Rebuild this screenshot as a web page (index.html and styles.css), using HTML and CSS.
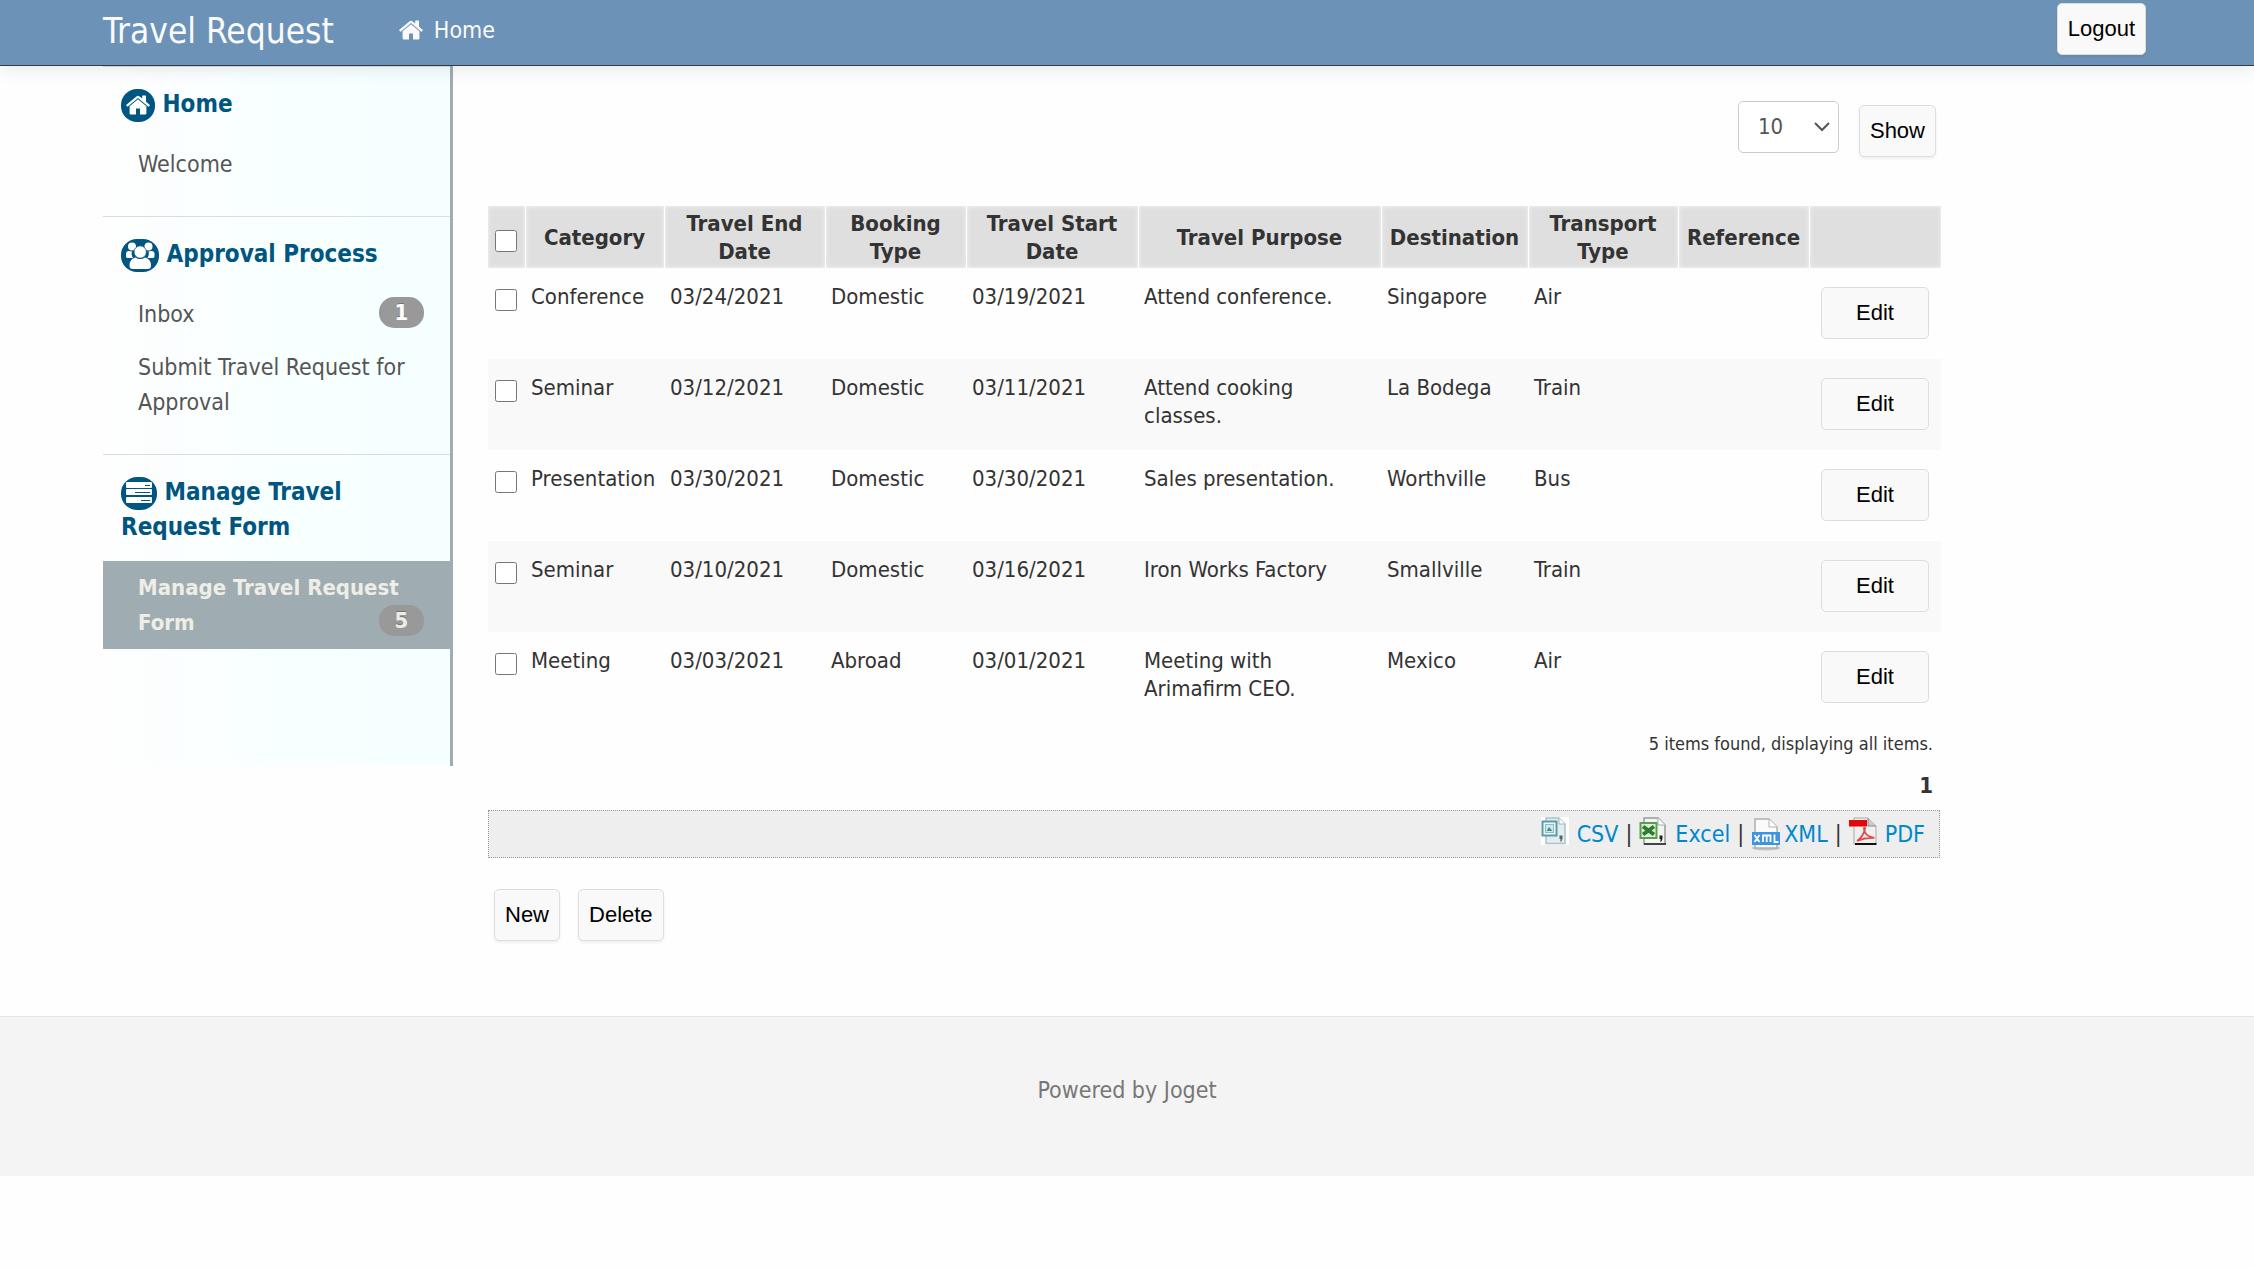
FILE: index.html
```html
<!DOCTYPE html>
<html lang="en">
<head>
<meta charset="utf-8">
<title>Travel Request</title>
<link rel="stylesheet" href="styles.css">
</head>
<body>
<svg class="sprite" aria-hidden="true">
  <symbol id="i-home" viewBox="0 0 24 20">
    <path d="M12 4.2 3.6 11.2V18.6q0 .8.8.8H10V13.6h4v5.8h5.600q.8 0 .8-.8V11.200Z"/>
    <path d="M23.600 9.800 20 6.800V1q0-.5-.5-.5h-2.800q-.5 0-.5.5V3.600L13.300 1.200q-1.300-1-2.600 0L.4 9.800q-.4.400-.1.800l.8.900q.4.300.8 0L12 3.100l10.100 8.400q.4.300.8 0l.8-.9q.3-.4-.1-.8Z"/>
  </symbol>
</svg>

<header class="topbar">
  <div class="topbar-inner">
    <a class="brand" href="#">Travel Request</a>
    <nav class="topnav"><a class="topnav-link" href="#"><svg class="nav-icon"><use href="#i-home"/></svg>Home</a></nav>
    <button class="btn" type="button">Logout</button>
  </div>
</header>

<div class="layout">
  <nav class="sidebar" aria-label="Menu">
    <section class="menu-group">
      <h2 class="menu-title"><svg class="menu-icon" width="34" height="33" viewBox="0 0 34 33"><rect width="34" height="33" rx="16" fill="#005581"/><use href="#i-home" x="5" y="6" width="24" height="20" fill="#fff"/></svg> Home</h2>
      <a class="menu-item" href="#">Welcome</a>
    </section>
    <section class="menu-group">
      <h2 class="menu-title"><svg class="menu-icon" width="38" height="33" viewBox="0 0 38 33"><rect width="38" height="33" rx="16" fill="#005581"/><g fill="#fff"><circle cx="11" cy="7.500" r="4"/><circle cx="27.500" cy="7.500" r="4"/><path d="M8 12q-3 0-3 3v2.500q0 1.500 2 1.500h5q-2-3-1-6.500Q9.500 12 8 12ZM30.500 12q3 0 3 3v2.500q0 1.500-2 1.500h-5q2-3 1-6.500 1.500-.5 3-.5Z"/><path d="M14.500 18.500q-6 1-6 8.500 0 3 3.500 3h14.500q3.500 0 3.500-3 0-7.500-6-8.500-4.700 3-9.500 0Z"/><circle cx="19.200" cy="13" r="6.200" stroke="#005581" stroke-width=".8"/></g></svg> Approval Process</h2>
      <a class="menu-item" href="#">Inbox <span class="badge">1</span></a>
      <a class="menu-item" href="#">Submit Travel Request for Approval</a>
    </section>
    <section class="menu-group">
      <h2 class="menu-title"><svg class="menu-icon" width="36" height="33" viewBox="0 0 36 33"><rect width="36" height="33" rx="16" fill="#005581"/><g fill="#fff"><rect x="5" y="5" width="26" height="6" rx="1"/><rect x="5" y="12" width="26" height="6" rx="1"/><rect x="5" y="20" width="26" height="6" rx="1"/></g><path d="M24 8.500h5M14 15.500h15M20 23.500h9" stroke="#005581"/></svg> Manage Travel Request Form</h2>
      <a class="menu-item active" href="#">Manage Travel Request Form <span class="badge">5</span></a>
    </section>
  </nav>

  <main class="content">
    <form class="list">
      <div class="page-size">
        <select class="size-select" aria-label="Rows per page"><option>10</option><option>20</option><option>50</option></select>
        <button class="btn" type="button">Show</button>
      </div>

      <table class="grid">
        <colgroup><col class="c-check"><col class="c-category"><col class="c-end"><col class="c-booking"><col class="c-start"><col class="c-purpose"><col class="c-dest"><col class="c-transport"><col class="c-ref"><col class="c-action"></colgroup>
        <thead>
          <tr><th><input class="check" type="checkbox" aria-label="Select all"></th><th>Category</th><th>Travel End Date</th><th>Booking Type</th><th>Travel Start Date</th><th>Travel Purpose</th><th>Destination</th><th>Transport Type</th><th>Reference</th><th></th></tr>
        </thead>
        <tbody>
          <tr><td><input class="check" type="checkbox" aria-label="Select row 1"></td><td>Conference</td><td>03/24/2021</td><td>Domestic</td><td>03/19/2021</td><td>Attend conference.</td><td>Singapore</td><td>Air</td><td></td><td class="action"><a class="btn" href="#">Edit</a></td></tr>
          <tr><td><input class="check" type="checkbox" aria-label="Select row 2"></td><td>Seminar</td><td>03/12/2021</td><td>Domestic</td><td>03/11/2021</td><td>Attend cooking classes.</td><td>La Bodega</td><td>Train</td><td></td><td class="action"><a class="btn" href="#">Edit</a></td></tr>
          <tr><td><input class="check" type="checkbox" aria-label="Select row 3"></td><td>Presentation</td><td>03/30/2021</td><td>Domestic</td><td>03/30/2021</td><td>Sales presentation.</td><td>Worthville</td><td>Bus</td><td></td><td class="action"><a class="btn" href="#">Edit</a></td></tr>
          <tr><td><input class="check" type="checkbox" aria-label="Select row 4"></td><td>Seminar</td><td>03/10/2021</td><td>Domestic</td><td>03/16/2021</td><td>Iron Works Factory</td><td>Smallville</td><td>Train</td><td></td><td class="action"><a class="btn" href="#">Edit</a></td></tr>
          <tr><td><input class="check" type="checkbox" aria-label="Select row 5"></td><td>Meeting</td><td>03/03/2021</td><td>Abroad</td><td>03/01/2021</td><td>Meeting with Arimafirm CEO.</td><td>Mexico</td><td>Air</td><td></td><td class="action"><a class="btn" href="#">Edit</a></td></tr>
        </tbody>
      </table>

      <p class="found">5 items found, displaying all items.</p>
      <p class="pages"><strong>1</strong></p>

      <div class="exports">
        <a href="#"><svg class="file-icon" viewBox="0 0 28 28"><path fill="#fff" d="M0 0h28v28H0z"/><path d="M5 1h13l6 6v19.500H5Z" fill="#e3edee" stroke="#a9c3c7" stroke-width="1.500"/><path d="M18 1v6h6" fill="#fff" stroke="#9dbcc0"/><rect x="1.500" y="4.500" width="14" height="14" fill="#eef7f8" stroke="#5b9ca8" stroke-width="2"/><rect x="4.500" y="7.500" width="8" height="8" fill="#d5e8ea" stroke="#8fbcc4"/><path d="m5.500 14 2.500-4 3.500 4Z" fill="#3f8f9c"/><path d="M18.500 18.500h3v3q0 2.500-2.500 3.500.8-1.500.5-3h-1Z" fill="#566"/></svg><span>CSV</span></a>
        <i>|</i>
        <a href="#"><svg class="file-icon" viewBox="0 0 28 28"><path d="M5 1h14l7 7v19H5Z" fill="#f4f4f4" stroke="#999" stroke-width="1.500"/><path d="M19 1v7h7" fill="#fff" stroke="#aaa"/><path d="M5 27h22" stroke="#444" stroke-width="2"/><rect x="1.500" y="6" width="16" height="15" fill="#dff0d8" stroke="#5a9e50" stroke-width="2"/><path d="m4 9.500 11 8M15 9.500l-11 8" stroke="#2f7d33" stroke-width="4"/><path d="M20.500 18.500h3v3q0 2.500-2.500 3.500.8-1.500.5-3h-1Z" fill="#222"/></svg><span>Excel</span></a>
        <i>|</i>
        <a class="tight" href="#"><svg class="file-icon wide" viewBox="0 0 30 34"><ellipse cx="15" cy="31" rx="14" ry="2.500" fill="#c4c4c4"/><path d="M4 2h14l8 8v21H4Z" fill="#fbfbfb" stroke="#b0b0b0" stroke-width="1.500"/><path d="M18 2v8h8" fill="#fff" stroke="#b0b0b0"/><path d="M1 15h28v13H1z" fill="#3d94df"/><path d="m3.500 18 5 7M8.500 18l-5 7M12 25v-6.500h7.500V25M15.700 18.500V25M23.500 17.500V25h4" fill="none" stroke="#fff" stroke-width="1.800"/></svg><span>XML</span></a>
        <i>|</i>
        <a href="#"><svg class="file-icon" viewBox="0 0 28 28"><path d="M5 1h14l8 8v18H5Z" fill="#efefef" stroke="#aaa"/><path d="M19 1v8h8" fill="#ccc" stroke="#888"/><path d="M6 27h21.500" stroke="#111" stroke-width="2"/><path d="M0 3h18v6.500H0z" fill="#e0090b"/><path d="M8 24q6-4 8-12 .3-1.500-.8-1.200-1 .8 1.200 5.200 2.800 4 9 4.800-9-.5-17.400 3.200Z" fill="none" stroke="#e04a4c" stroke-width="1.800"/></svg><span>PDF</span></a>
      </div>

      <div class="actions">
        <button class="btn" type="button">New</button>
        <button class="btn" type="button">Delete</button>
      </div>
    </form>
  </main>
</div>

<footer class="footer">Powered by Joget</footer>
</body>
</html>
```
FILE: styles.css
```css
* { box-sizing: border-box; }

body {
  margin: 0;
  background: #fefefe;
  color: #333;
  font: 22px/28px "DejaVu Sans Condensed", Tahoma, sans-serif;
}

a { color: inherit; text-decoration: none; }

.sprite { position: absolute; width: 0; height: 0; }

/* Buttons */
.btn {
  display: inline-block;
  height: 52px;
  padding: 0 10px;
  border: 1px solid #ddd;
  border-radius: 5px;
  background: #f9f9f9;
  box-shadow: 0 2px 3px rgba(0, 0, 0, .06);
  color: #000;
  font: 22px/50px "Liberation Sans", Arial, sans-serif;
  text-align: center;
}

/* Top bar */
.topbar {
  position: relative;
  background: #6d92b8;
  border-bottom: 1px solid #333b47;
  box-shadow: 0 2px 18px rgba(0, 0, 0, .1);
}

.topbar-inner {
  display: flex;
  align-items: flex-start;
  height: 65px;
  margin: 0 108px 0 103px;
  padding-top: 3px;
  color: #fafafa;
}

.brand { font-size: 35px; line-height: 56px; }

.topnav { flex: 1; margin-left: 65px; }

.topnav-link {
  display: inline-flex;
  align-items: center;
  gap: 11px;
  font-size: 23px;
  line-height: 54px;
}

.nav-icon { width: 24px; height: 20px; fill: #fafafa; }

/* Page columns */
.layout {
  display: flex;
  align-items: flex-start;
  margin: 0 103px;
}

.sidebar {
  flex: 0 0 350px;
  padding-bottom: 117px;
  border-right: 3px solid #9fadb2;
  background: linear-gradient(to right, #fefefe, #f8ffff 50%, #f5ffff);
}

.menu-group { padding-bottom: 25px; border-top: 1px solid #ddd; }
.menu-group:last-child { padding-bottom: 0; }

.menu-title {
  margin: 0;
  padding: 20px 18px 16px;
  color: #005581;
  font-size: 24px;
  line-height: 35px;
}

.menu-icon { margin: -4px 0 -4px; vertical-align: middle; }

.menu-item {
  display: block;
  position: relative;
  padding: 9px 25px 9px 35px;
  color: #555;
  font-size: 23px;
  line-height: 35px;
}

.menu-item.active { background: #9fadb2; color: #eeeee6; font-size: 22px; font-weight: bold; }

.badge {
  position: absolute;
  right: 26px;
  bottom: 13px;
  width: 45px;
  border-radius: 15px;
  background: #999;
  color: #fff;
  font-size: 22px;
  font-weight: bold;
  line-height: 31px;
  text-align: center;
  text-shadow: 0 -1px 0 rgba(0, 0, 0, .25);
}

.active .badge { color: #eeeee6; }

/* List */
.content { flex: 1; min-width: 0; margin: 0 211px 0 35px; }

.page-size {
  display: flex;
  justify-content: flex-end;
  gap: 20px;
  padding: 35px 4px 49px 0;
}

.page-size .btn { margin-top: 4px; }

.size-select {
  width: 101px;
  height: 52px;
  padding: 0 19px;
  appearance: none;
  border: 1px solid #ccc;
  border-radius: 5px;
  background: #fff url("data:image/svg+xml,%3Csvg xmlns='http://www.w3.org/2000/svg' width='16' height='10'%3E%3Cpath d='m1 1 7 7 7-7' fill='none' stroke='%23555' stroke-width='2'/%3E%3C/svg%3E") no-repeat right 8px center;
  color: #555;
  font: inherit;
}

.grid {
  width: 100%;
  table-layout: fixed;
  border-collapse: collapse;
}

.c-check { width: 37px; }
.c-category { width: 139px; }
.c-end { width: 161px; }
.c-booking { width: 141px; }
.c-start { width: 172px; }
.c-purpose { width: 243px; }
.c-dest { width: 147px; }
.c-transport { width: 150px; }
.c-ref { width: 131px; }
.c-action { width: 132px; }

.grid th {
  height: 62px;
  padding: 4px 6px 2px;
  border-right: 1px solid #fff;
  background: #dfdfdf;
  box-shadow: inset 0 0 4px #f4f4f4;
}

.grid td { height: 91px; padding: 15px 6px 0; vertical-align: top; }

.grid tbody tr:nth-child(even) { background: #f9f9f9; }

.check { display: block; width: 22px; height: 22px; margin: 6px 0 0 1px; }

.grid .action { padding: 19px 12px 0; }
.action .btn { display: block; box-shadow: none; }

.found { margin: 7px 7px 0 0; font-size: 18px; text-align: right; }

.pages { margin: 14px 7px 0 0; text-align: right; }

.exports {
  display: flex;
  align-items: center;
  justify-content: flex-end;
  gap: 7px;
  height: 48px;
  margin-top: 10px;
  padding-right: 14px;
  border: 1px dotted #999;
  background: #eee;
  font-size: 23px;
}

.exports a { display: flex; align-items: center; gap: 8px; color: #0088cc; }
.exports .tight { gap: 3px; }
.exports i { font-style: normal; }

.file-icon { width: 28px; height: 28px; margin-bottom: 6px; }
.file-icon.wide { width: 30px; height: 34px; margin-bottom: 0; }

.actions { display: flex; gap: 18px; padding: 31px 6px 75px; }

.footer {
  padding: 55px 0 68px;
  border-top: 1px solid #e5e5e5;
  background: #f4f4f4;
  color: #777;
  font-size: 23px;
  line-height: 36px;
  text-align: center;
}
```
